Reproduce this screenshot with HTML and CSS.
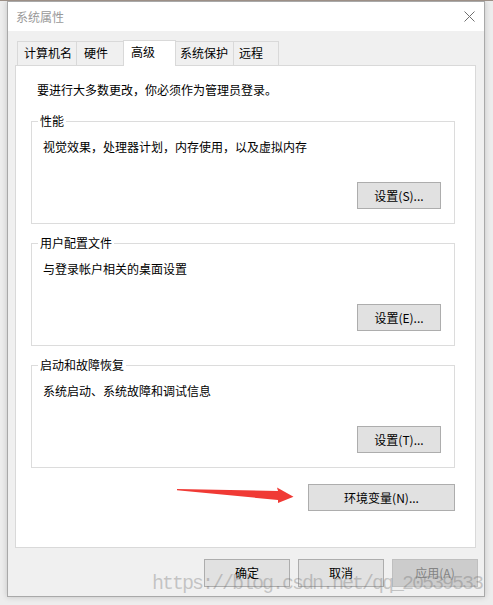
FILE: index.html
```html
<!DOCTYPE html>
<html lang="zh-CN">
<head>
  <meta charset="UTF-8">
  <title>系统属性</title>
  <link rel="stylesheet" href="styles.css">
</head>
<body>

  <div class="window">
    <div class="titlebar">
      <span class="title">系统属性</span>
      <svg class="close" width="11" height="11" viewBox="0 0 11 11">
        <path d="M0.5 0.5 L10.5 10.5 M10.5 0.5 L0.5 10.5" stroke="#6f6f6f" stroke-width="1" fill="none"/>
      </svg>
    </div>

    <div class="client">
      <div class="tabs">
        <div class="tab tab-1">计算机名</div>
        <div class="tab tab-2">硬件</div>
        <div class="tab tab-3 active">高级</div>
        <div class="tab tab-4">系统保护</div>
        <div class="tab tab-5">远程</div>
      </div>

      <div class="panel">
        <p class="intro">要进行大多数更改，你必须作为管理员登录。</p>

        <fieldset class="group">
          <legend>性能</legend>
          <p class="desc">视觉效果，处理器计划，内存使用，以及虚拟内存</p>
          <div class="group-actions">
            <button class="btn">设置(S)...</button>
          </div>
        </fieldset>

        <fieldset class="group">
          <legend>用户配置文件</legend>
          <p class="desc">与登录帐户相关的桌面设置</p>
          <div class="group-actions">
            <button class="btn">设置(E)...</button>
          </div>
        </fieldset>

        <fieldset class="group">
          <legend>启动和故障恢复</legend>
          <p class="desc">系统启动、系统故障和调试信息</p>
          <div class="group-actions">
            <button class="btn">设置(T)...</button>
          </div>
        </fieldset>

        <div class="panel-actions">
          <button class="btn btn-wide">环境变量(N)...</button>
        </div>
      </div>

      <div class="dialog-buttons">
        <button class="btn btn-dialog">确定</button>
        <button class="btn btn-dialog">取消</button>
        <button class="btn btn-dialog" disabled>应用(A)</button>
      </div>
    </div>

    <!-- annotation arrow drawn over the screenshot -->
    <svg class="arrow" width="130" height="30" viewBox="0 0 130 30">
      <polygon points="6,8 107,10 106,6.5 122.5,15.7 107,22 107,19 6,9.2" fill="#f03a35"/>
    </svg>

    <div class="watermark">https://blog.csdn.net/qq_20539533</div>
  </div>

</body>
</html>
```

FILE: styles.css
```css
* {
  margin: 0;
  padding: 0;
  box-sizing: border-box;
}

body {
  font-family: "Noto Sans CJK SC", "Noto Sans", sans-serif;
  font-size: 12px;
  line-height: 16px;
  color: #000;
  background: #ededed;
  border-top: 1px solid #9c8f86;
  height: 605px;
  overflow: hidden;
}

.window {
  position: relative;
  width: 478px;
  margin-left: 7px;
  background: #f0f0f0;
  border: 1px solid #a9a9a9;
  box-shadow: 0 0 6px rgba(0, 0, 0, 0.18);
}

.titlebar {
  height: 29px;
  background: #fff;
  display: flex;
  align-items: center;
  justify-content: space-between;
  padding: 0 9px 0 8px;
}

.title {
  color: #999;
}

.close {
  display: block;
}

.client {
  padding: 9px 8px 9px 7px;
}

/* tab strip */
.tabs {
  display: flex;
  align-items: flex-end;
  margin-left: 2px;
}

.tab {
  height: 24px;
  line-height: 22px;
  background: #f0f0f0;
  border: 1px solid #d9d9d9;
  border-bottom: none;
  margin-left: -1px;
  white-space: nowrap;
}

.tab-1 { width: 60px; padding-left: 6px; margin-left: 0; }
.tab-2 { width: 48px; padding-left: 7px; }
.tab-3 { width: 53px; padding-left: 7px; }
.tab-4 { width: 59px; padding-left: 4px; }
.tab-5 { width: 46px; padding-left: 5px; }

.tab.active {
  position: relative;
  z-index: 1;
  height: 26px;
  line-height: 21px;
  background: #fff;
  margin-bottom: -1px;
}

.panel {
  background: #fff;
  border: 1px solid #d9d9d9;
  padding: 16px 20px 36px 15px;
}

.intro {
  margin: 0 0 15px 6px;
}

.group {
  display: block;
  min-width: 0;
  margin: 0;
  border: 1px solid #dcdcdc;
  padding: 0 13px 14px 6px;
}

.group + .group {
  margin-top: 11px;
}

.group legend {
  padding: 0 2px;
  line-height: 16px;
}

.desc {
  margin: 10px 0 0 5px;
}

.group-actions {
  display: flex;
  justify-content: flex-end;
  margin-top: 27px;
}

.btn {
  font-family: inherit;
  font-size: 12px;
  line-height: 16px;
  color: #000;
  background: #e1e1e1;
  border: 1px solid #adadad;
  width: 84px;
  height: 27px;
}

.btn:disabled {
  background: #cccccc;
  border-color: #bfbfbf;
  color: #838383;
}

.panel-actions {
  display: flex;
  justify-content: flex-end;
  margin-top: 16px;
}

.btn-wide {
  width: 147px;
}

.dialog-buttons {
  display: flex;
  justify-content: flex-end;
  gap: 8px;
  margin: 11px -2px 0 0;
}

.btn-dialog {
  width: 86px;
  height: 28px;
}

.arrow {
  position: absolute;
  left: 163px;
  top: 479px;
}

.watermark {
  position: absolute;
  left: 144px;
  top: 572px;
  font-family: "Liberation Mono", monospace;
  font-size: 20px;
  line-height: 20px;
  letter-spacing: -2px;
  color: rgba(110, 110, 110, 0.35);
  white-space: nowrap;
  pointer-events: none;
}
```
